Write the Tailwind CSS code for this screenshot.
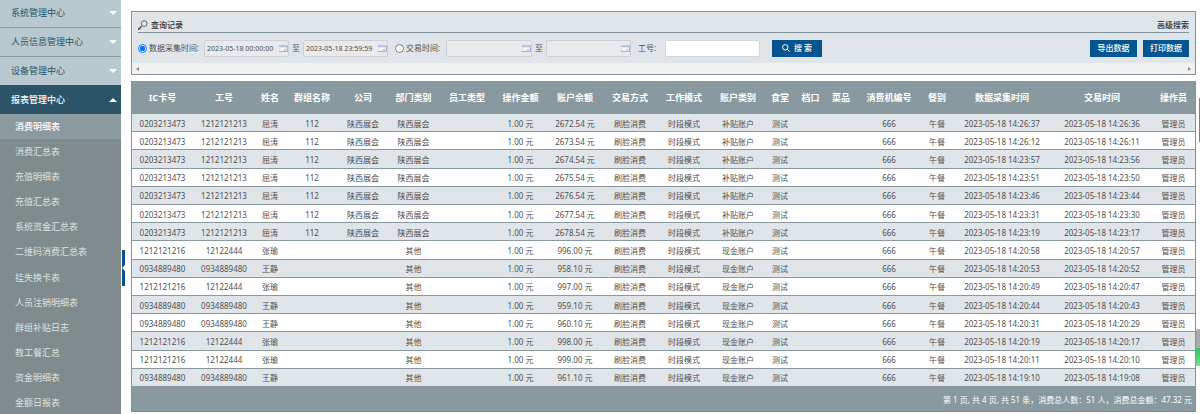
<!DOCTYPE html>
<html lang="zh-CN">
<head>
  <meta charset="UTF-8">
  <meta name="viewport" content="width=device-width, initial-scale=1.0">
  <title>消费明细表</title>
  <script src="https://cdn.jsdelivr.net/npm/@tailwindcss/browser@4"></script>
</head>
<body class="relative flex min-h-screen overflow-hidden bg-white font-['Noto_Sans','Noto_Sans_CJK_SC',sans-serif] text-[8px] leading-[12px] text-[#505050]">

  <!-- Sidebar -->
  <nav class="w-[121px] shrink-0 bg-[#7f8b8d] text-[9px]">
    <button class="flex h-7 w-full items-center justify-between border-b border-[#8a9ea6] bg-[#b8cad0] pr-1 pl-[11px] pb-0.5 text-[#2d5363]">系统管理中心
      <svg class="h-1 w-2" viewBox="0 0 8 4"><path d="M0 0h8L4 4z" fill="#fff"/></svg>
    </button>
    <button class="flex h-[29px] w-full items-center justify-between border-b border-[#8a9ea6] bg-[#b8cad0] pr-1 pl-[11px] text-[#2d5363]">人员信息管理中心
      <svg class="h-1 w-2" viewBox="0 0 8 4"><path d="M0 0h8L4 4z" fill="#fff"/></svg>
    </button>
    <button class="flex h-7 w-full items-center justify-between bg-[#b8cad0] pr-1 pl-[11px] text-[#2d5363]">设备管理中心
      <svg class="h-1 w-2" viewBox="0 0 8 4"><path d="M0 0h8L4 4z" fill="#fff"/></svg>
    </button>
    <button class="flex h-[29px] w-full items-center justify-between bg-[#2b5468] pr-1 pl-[11px] font-medium text-white">报表管理中心
      <svg class="h-1 w-2" viewBox="0 0 8 4"><path d="M0 4h8L4 0z" fill="#fff"/></svg>
    </button>
    <ul class="grid h-[302px] grid-rows-12 text-[#dde1e2]">
      <li class="flex items-center bg-[#8a9a9f] pl-[15px] font-medium text-white"><a href="#">消费明细表</a></li>
      <li class="flex items-center pl-[15px]"><a href="#">消费汇总表</a></li>
      <li class="flex items-center pl-[15px]"><a href="#">充值明细表</a></li>
      <li class="flex items-center pl-[15px]"><a href="#">充值汇总表</a></li>
      <li class="flex items-center pl-[15px]"><a href="#">系统资金汇总表</a></li>
      <li class="flex items-center pl-[15px]"><a href="#">二维码消费汇总表</a></li>
      <li class="flex items-center pl-[15px]"><a href="#">挂失换卡表</a></li>
      <li class="flex items-center pl-[15px]"><a href="#">人员注销明细表</a></li>
      <li class="flex items-center pl-[15px]"><a href="#">群组补贴日志</a></li>
      <li class="flex items-center pl-[15px]"><a href="#">教工餐汇总</a></li>
      <li class="flex items-center pl-[15px]"><a href="#">资金明细表</a></li>
      <li class="flex items-center pl-[15px]"><a href="#">金额日报表</a></li>
    </ul>
  </nav>

  <!-- Collapse handle -->
  <button class="absolute top-[250px] left-[122px] h-9 w-[3px]" aria-label="收起">
    <svg class="h-9 w-[3px]" viewBox="0 0 3 36"><path d="M0 0h3v15L0 18l3 3v15H0z" fill="#0b4f8e"/></svg>
  </button>

  <main class="min-w-0 flex-1 pt-[11px] pr-1 pl-[10px]">

    <!-- Search panel -->
    <form class="border border-[#83939a] bg-[#e0e5ea]">
      <div class="mx-1.5 flex h-[21px] items-center justify-between border-b border-[#83939a] pt-1.5 font-medium text-[#333]">
        <h2 class="flex items-center gap-[3px]">
          <svg class="h-[10px] w-[10px]" viewBox="0 0 10 10" fill="none" stroke="#555">
            <circle cx="6.2" cy="3.6" r="2.9" stroke-width="0.9"/>
            <path d="M4 5.8 2.6 7.2" stroke-width="0.9"/>
            <path d="M2.6 7.3.8 9.1" stroke-width="1.8" stroke-linecap="round"/>
          </svg>
          查询记录
        </h2>
        <a href="#">高级搜索</a>
      </div>

      <div class="mx-1.5 flex h-[30px] items-center">
        <label class="flex w-[66px] shrink-0 items-center gap-0.5 whitespace-nowrap"><input type="radio" name="timeType" checked class="m-0 h-[9px] w-[9px]">数据采集时间:</label>
        <div class="relative w-[85px] shrink-0">
          <input type="text" aria-label="采集开始时间" value="2023-05-18 00:00:00" class="block h-[17px] w-full rounded-xs border border-[#cdd1d5] bg-[#e8eaeb] px-0.5 text-[7px]">
          <svg class="absolute top-1 right-px h-[9px] w-[9px]" viewBox="0 0 9 9"><path d="M0 1h9v7H0z" fill="#dfe5f5"/><path d="M0 1h9v2H0z" fill="#b9c3e6"/><path d="M0 8h9V3H8v4H0z" fill="#a5b1d9"/><path d="M1.500 4.500h5M1.500 6h3" stroke="#fff"/><path d="M5 5h2v1.500H5z" fill="#e3b5ae"/></svg>
        </div>
        <span class="w-[14px] shrink-0 text-center">至</span>
        <div class="relative w-[85px] shrink-0">
          <input type="text" aria-label="采集结束时间" value="2023-05-18 23:59:59" class="block h-[17px] w-full rounded-xs border border-[#cdd1d5] bg-[#e8eaeb] px-0.5 text-[7px]">
          <svg class="absolute top-1 right-px h-[9px] w-[9px]" viewBox="0 0 9 9"><path d="M0 1h9v7H0z" fill="#dfe5f5"/><path d="M0 1h9v2H0z" fill="#b9c3e6"/><path d="M0 8h9V3H8v4H0z" fill="#a5b1d9"/><path d="M1.500 4.500h5M1.500 6h3" stroke="#fff"/><path d="M5 5h2v1.500H5z" fill="#e3b5ae"/></svg>
        </div>
        <label class="ml-[7px] flex w-[51px] shrink-0 items-center gap-0.5 whitespace-nowrap"><input type="radio" name="timeType" class="m-0 h-[9px] w-[9px]">交易时间:</label>
        <div class="relative w-[86px] shrink-0">
          <input type="text" aria-label="交易开始时间" class="block h-[17px] w-full rounded-xs border border-[#cdd1d5] bg-[#e8eaeb] px-0.5 text-[7px]">
          <svg class="absolute top-1 right-px h-[9px] w-[9px]" viewBox="0 0 9 9"><path d="M0 1h9v7H0z" fill="#dfe5f5"/><path d="M0 1h9v2H0z" fill="#b9c3e6"/><path d="M0 8h9V3H8v4H0z" fill="#a5b1d9"/><path d="M1.500 4.500h5M1.500 6h3" stroke="#fff"/><path d="M5 5h2v1.500H5z" fill="#c6cfee"/></svg>
        </div>
        <span class="w-[14px] shrink-0 text-center">至</span>
        <div class="relative w-[85px] shrink-0">
          <input type="text" aria-label="交易结束时间" class="block h-[17px] w-full rounded-xs border border-[#cdd1d5] bg-[#e8eaeb] px-0.5 text-[7px]">
          <svg class="absolute top-1 right-px h-[9px] w-[9px]" viewBox="0 0 9 9"><path d="M0 1h9v7H0z" fill="#dfe5f5"/><path d="M0 1h9v2H0z" fill="#b9c3e6"/><path d="M0 8h9V3H8v4H0z" fill="#a5b1d9"/><path d="M1.500 4.500h5M1.500 6h3" stroke="#fff"/><path d="M5 5h2v1.500H5z" fill="#c6cfee"/></svg>
        </div>
        <label for="jobNo" class="ml-[7px] w-[27px] shrink-0 whitespace-nowrap">工号:</label>
        <input id="jobNo" type="text" class="h-[17px] w-[95px] rounded-xs border border-[#d3d7da] bg-white px-1">
        <button type="button" class="ml-3 flex h-[17px] w-[50px] shrink-0 items-center justify-center gap-1 bg-[#04548f] font-medium text-white">
          <svg class="h-2 w-2" viewBox="0 0 8 8" fill="none" stroke="#fff"><circle cx="3.300" cy="3.300" r="2.700"/><path d="m5.300 5.300 2.400 2.400"/></svg>
          搜 索
        </button>
        <button type="button" class="ml-auto h-[17px] w-[47px] shrink-0 bg-[#04548f] font-medium text-white">导出数据</button>
        <button type="button" class="ml-1.5 h-[17px] w-[46px] shrink-0 bg-[#04548f] font-medium text-white">打印数据</button>
      </div>

      <!-- Scroll strip -->
      <div class="flex h-[11px] items-center justify-between bg-[#f0f0f0] px-1">
        <svg class="h-1 w-[3px]" viewBox="0 0 3 4"><path d="M3 0v4L0 2z" fill="#8a8a8a"/></svg>
        <svg class="h-1 w-[3px]" viewBox="0 0 3 4"><path d="M0 0v4l3-2z" fill="#8a8a8a"/></svg>
      </div>
    </form>

    <!-- Records -->
    <div class="mt-1.5 border-x border-[#83939a]">
      <table class="h-[306px] w-full table-fixed border-collapse text-center whitespace-nowrap">
        <colgroup>
          <col class="w-[61px]"><col class="w-[62px]"><col class="w-[30px]"><col class="w-[54px]"><col class="w-[48px]">
          <col class="w-[53px]"><col class="w-[54px]"><col class="w-[53px]"><col class="w-[56px]"><col class="w-[54px]">
          <col class="w-[54px]"><col class="w-[54px]"><col class="w-[30px]"><col class="w-[31px]"><col class="w-[30px]">
          <col class="w-[66px]"><col class="w-[30px]"><col class="w-[100px]"><col class="w-[100px]"><col class="w-[43px]">
        </colgroup>
        <thead class="bg-[#88999f] text-[9px] text-white">
          <tr class="h-[33px]">
            <th>IC卡号</th><th>工号</th><th>姓名</th><th>群组名称</th><th>公司</th>
            <th>部门类别</th><th>员工类型</th><th>操作金额</th><th>账户余额</th><th>交易方式</th>
            <th>工作模式</th><th>账户类别</th><th>食堂</th><th>档口</th><th>菜品</th>
            <th>消费机编号</th><th>餐别</th><th>数据采集时间</th><th>交易时间</th><th>操作员</th>
          </tr>
        </thead>
        <tbody id="records"></tbody>
      </table>
      <p class="flex h-[25px] items-center justify-end border-b border-[#7b8c93] bg-[#88999f] pt-0.5 pr-[3px] text-white">第 1 页, 共 4 页, 共 51 条，消费总人数：51 人，消费总金额：47.32 元</p>
    </div>
  </main>

  <!-- Window edge widgets -->
  <div class="absolute top-[98px] right-0 h-11 w-px bg-[#7478bd]"></div>
  <div class="absolute top-[329px] right-0 h-[37px] w-1 overflow-hidden rounded-l-xs bg-[#a9a9a9]">
    <div class="mt-[19px] h-[18px] bg-linear-to-b from-[#2fc468] to-[#6be08f]"></div>
  </div>

  <script>
    // card no, job no, name, balance, collected, traded
    const records = [
      ['0203213473', '1212121213', '屈涛', '2672.54', '14:26:37', '14:26:36'],
      ['0203213473', '1212121213', '屈涛', '2673.54', '14:26:12', '14:26:11'],
      ['0203213473', '1212121213', '屈涛', '2674.54', '14:23:57', '14:23:56'],
      ['0203213473', '1212121213', '屈涛', '2675.54', '14:23:51', '14:23:50'],
      ['0203213473', '1212121213', '屈涛', '2676.54', '14:23:46', '14:23:44'],
      ['0203213473', '1212121213', '屈涛', '2677.54', '14:23:31', '14:23:30'],
      ['0203213473', '1212121213', '屈涛', '2678.54', '14:23:19', '14:23:17'],
      ['1212121216', '12122444', '张瑜', '996.00', '14:20:58', '14:20:57'],
      ['0934889480', '0934889480', '王静', '958.10', '14:20:53', '14:20:52'],
      ['1212121216', '12122444', '张瑜', '997.00', '14:20:49', '14:20:47'],
      ['0934889480', '0934889480', '王静', '959.10', '14:20:44', '14:20:43'],
      ['0934889480', '0934889480', '王静', '960.10', '14:20:31', '14:20:29'],
      ['1212121216', '12122444', '张瑜', '998.00', '14:20:19', '14:20:17'],
      ['1212121216', '12122444', '张瑜', '999.00', '14:20:11', '14:20:10'],
      ['0934889480', '0934889480', '王静', '961.10', '14:19:10', '14:19:08']
    ];

    document.getElementById('records').innerHTML = records.map(([card, job, name, balance, collected, traded]) => {
      const grouped = name === '屈涛';
      const cells = [
        card, job, name, grouped ? '112' : '', grouped ? '陕西展会' : '', grouped ? '陕西展会' : '其他', '',
        '1.00 元', `${balance} 元`, '刷脸消费', '时段模式', grouped ? '补贴账户' : '现金账户', '测试', '', '',
        '666', '午餐', `2023-05-18 ${collected}`, `2023-05-18 ${traded}`, '管理员'
      ];
      return `<tr class="border-b border-[#8a999f] odd:bg-[#e0e5ea]">${cells.map(c => `<td class="pt-0.5">${c}</td>`).join('')}</tr>`;
    }).join('');
  </script>
</body>
</html>
